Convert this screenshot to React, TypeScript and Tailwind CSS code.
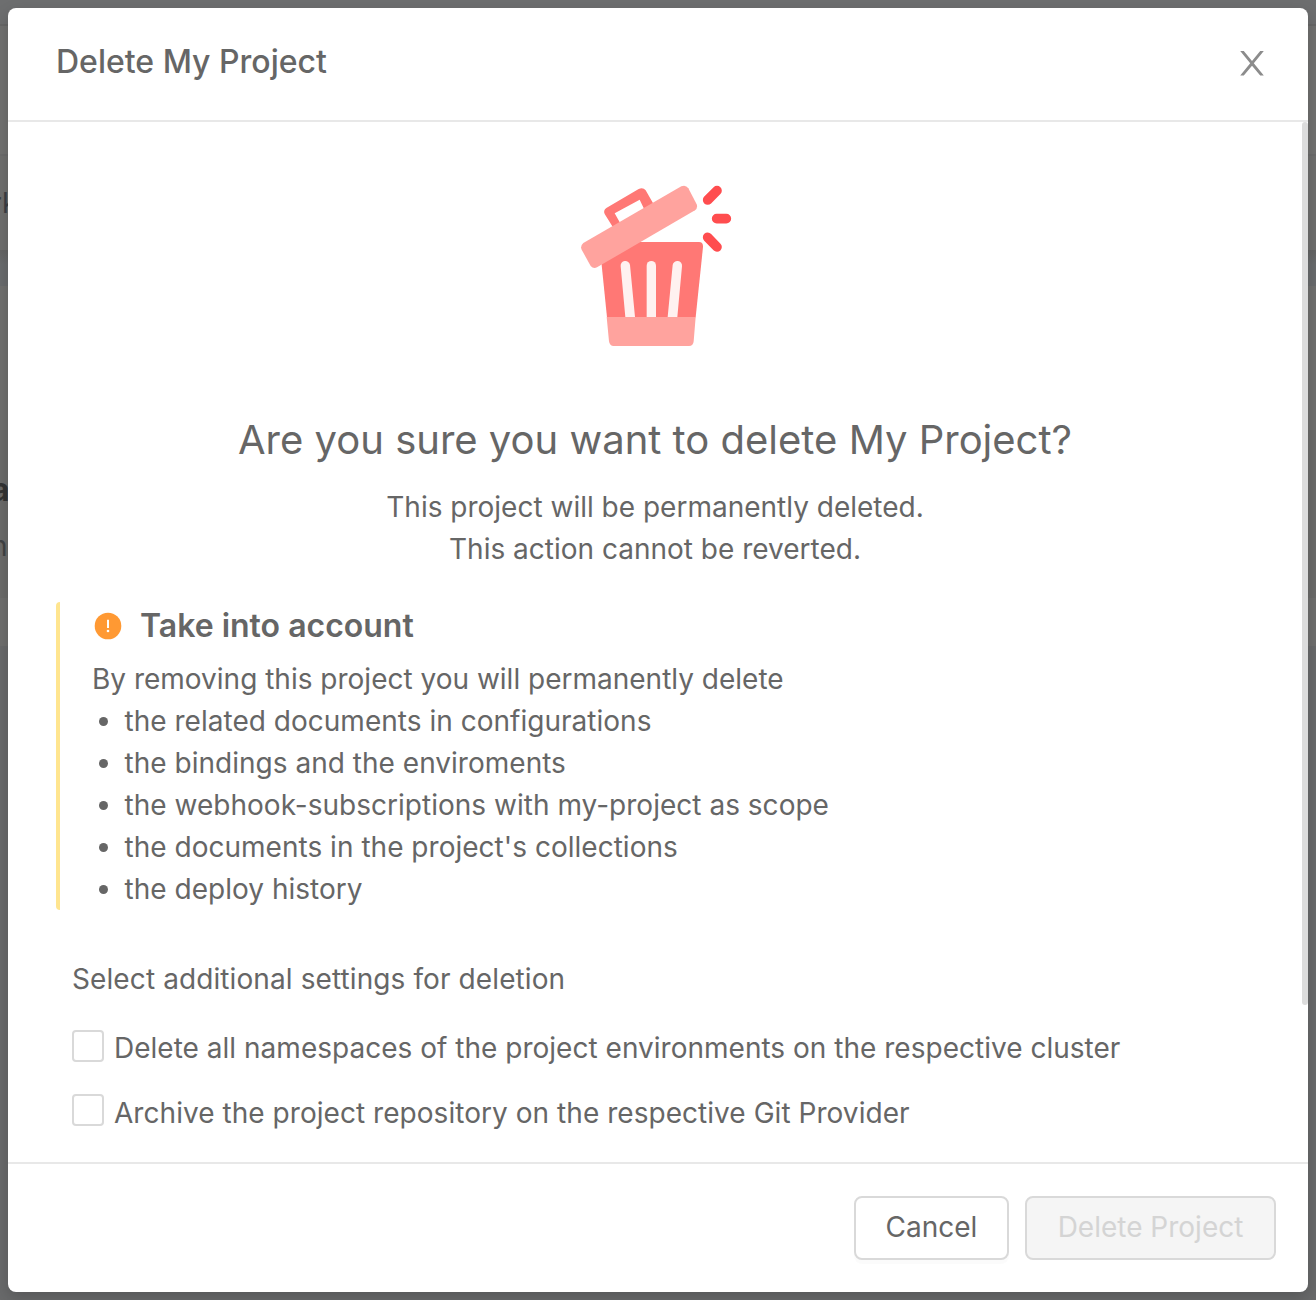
const consequences = [
  'the related documents in configurations',
  'the bindings and the enviroments',
  'the webhook-subscriptions with my-project as scope',
  "the documents in the project's collections",
  'the deploy history',
];

const settings = [
  { label: 'Delete all namespaces of the project environments on the respective cluster', style: '-mt-px tracking-[0.015px]' },
  { label: 'Archive the project repository on the respective Git Provider', style: 'tracking-[0.045px]' },
];

function Backdrop() {
  return (
    <div className="absolute inset-0 flex flex-col overflow-hidden bg-[#696a6b]" aria-hidden="true">
      <div className="h-6 shrink-0 bg-[#6d6e6f]" />
      <div className="h-[130px] shrink-0 border-t-2 border-[#676767] bg-[#717170]" />
      <div className="flex h-24 shrink-0 items-center border-t-2 border-[#6b6b6b] bg-[#6f6f6e]">
        <span className="-ml-[9px] text-[28px] leading-none text-[#3c3f44]">rk</span>
      </div>
      <div className="h-9 shrink-0 bg-linear-to-b from-[#646464] to-[#696b6d] to-40%" />
      <div className="h-36 shrink-0 bg-[#70706f]" />
      <div className="flex h-[168px] shrink-0 flex-col bg-[#6b6b6a]">
        <span className="-ml-[9px] mt-[46px] text-[32px] font-bold leading-7 text-[#343434]">a</span>
        <span className="-ml-[9px] mt-7 text-[28px] leading-7 text-[#404244]">n</span>
      </div>
      <div className="h-12 shrink-0 bg-[#6f6f6e]" />
    </div>
  );
}

function TrashIllustration() {
  return (
    <svg width="190" height="190" viewBox="0 0 570 570" className="block shrink-0">
      <path d="M118 216H417Q430 216 429 231L407 442H141Z" fill="#ff7875" />
      <path d="M140 441H407L401 514Q400 528 387 528H161Q149 528 147 514Z" fill="#ffa39e" />
      <path d="M196 441L182 289A14 14 0 0 1 210 285L225 441Z" fill="#fff1f0" />
      <path d="M260 441V287A14 14 0 0 1 288 287V441Z" fill="#fff1f0" />
      <path d="M323 441L338 285A14 14 0 0 1 366 289L352 441Z" fill="#fff1f0" />
      <path
        fillRule="evenodd"
        d="M157 169L134 132Q129 121 139 114L236 57Q249 51 257 61L281 103L230 145L174 178ZM164 130L180 158L252 116L239 89Z"
        fill="#ff7875"
      />
      <path
        d="M70 219L364 49Q377 43 385 55L410 103Q414 114 405 121L111 292Q100 297 92 288L65 239Q60 227 70 219Z"
        fill="#ffa39e"
      />
      <path d="M443 90L471 62M470 146H499M443 202L471 231" stroke="#ff4d4f" strokeWidth="29" strokeLinecap="round" />
    </svg>
  );
}

function WarningIcon() {
  return (
    <svg width="28" height="28" viewBox="0 0 28 28" className="-mt-px shrink-0">
      <circle cx="14" cy="14" r="13.3" fill="#ff9933" />
      <path d="M13 7.8h2v8.2h-2z" fill="#fff" />
      <circle cx="14" cy="19" r="1.3" fill="#fff" />
    </svg>
  );
}

export default function App() {
  return (
    <div className='relative h-[1300px] w-[1316px] overflow-hidden p-2 font-["Inter",sans-serif] text-[28px] leading-[42px] text-[#666]'>
      <Backdrop />
      <div className="relative flex h-[1284px] flex-col overflow-hidden rounded-lg bg-white whitespace-nowrap shadow-[0_6px_16px_rgba(0,0,0,0.18)]">
        <header className="flex h-[114px] shrink-0 items-start justify-between border-b-2 border-[#e8e8e8] pt-[30px] pr-11 pl-12">
          <h1 className="text-[32px] leading-12 font-medium">Delete My Project</h1>
          <svg width="24" height="25" viewBox="0 0 24 25" className="mt-[13px]" aria-label="Close">
            <path d="M.2 0H3.8L12 9.9 20.2 0H23.8L13.8 12.3 23.8 24.6H20.2L12 14.7 3.8 24.6H.2L10.2 12.3Z" fill="#8c8c8c" />
          </svg>
        </header>

        <main className="flex h-[1040px] shrink-0">
          <div className="flex grow flex-col px-12 pt-12">
            <section className="flex flex-col items-center text-center">
              <TrashIllustration />
              <h2 className="mt-12 text-[40px] leading-[64px]">Are you sure you want to delete My Project?</h2>
              <p className="mt-3.5">
                This project will be permanently deleted.
                <br />
                This action cannot be reverted.
              </p>
            </section>

            <section className="mt-8 h-[308px] shrink-0 rounded-l-[4px] border-l-4 border-[#ffe58f] pl-8">
              <div className="flex items-center pl-0.5">
                <WarningIcon />
                <h3 className="ml-[18px] text-[32px] leading-12 font-semibold">Take into account</h3>
              </div>
              <p className="mt-2">By removing this project you will permanently delete</p>
              <ul className="tracking-[0.02px]">
                {consequences.map((item) => (
                  <li key={item} className="flex items-center">
                    <span className="mr-[16.5px] ml-[7px] size-[9px] rounded-full bg-[#666]" />
                    {item}
                  </li>
                ))}
              </ul>
            </section>

            <section className="mt-12 pl-4">
              <p className="tracking-[0.1px]">Select additional settings for deletion</p>
              <div className="mt-7 flex flex-col gap-[22px]">
                {settings.map(({ label, style }) => (
                  <label key={label} className="flex h-[42px] items-start">
                    <input
                      type="checkbox"
                      className="mt-0.5 mr-2.5 size-8 shrink-0 appearance-none rounded-[4px] border-2 border-[#d9d9d9] bg-white"
                    />
                    <span className={style}>{label}</span>
                  </label>
                ))}
              </div>
            </section>
          </div>
          <div className="h-[883px] w-1.5 shrink-0 rounded-full bg-[#dcdcdc]" />
        </main>

        <footer className="flex grow items-start justify-end gap-4 border-t-2 border-[#e8e8e8] pt-8 pr-8">
          <button className="h-16 w-[155px] rounded-lg border-2 border-[#d9d9d9] bg-white pb-0.5 shadow-[0_4px_0_rgba(0,0,0,0.015)]">
            Cancel
          </button>
          <button disabled className="h-16 w-[251px] rounded-lg border-2 border-[#d9d9d9] bg-[#f5f5f5] pb-0.5 text-[#d4d4d4]">
            Delete Project
          </button>
        </footer>
      </div>
    </div>
  );
}
